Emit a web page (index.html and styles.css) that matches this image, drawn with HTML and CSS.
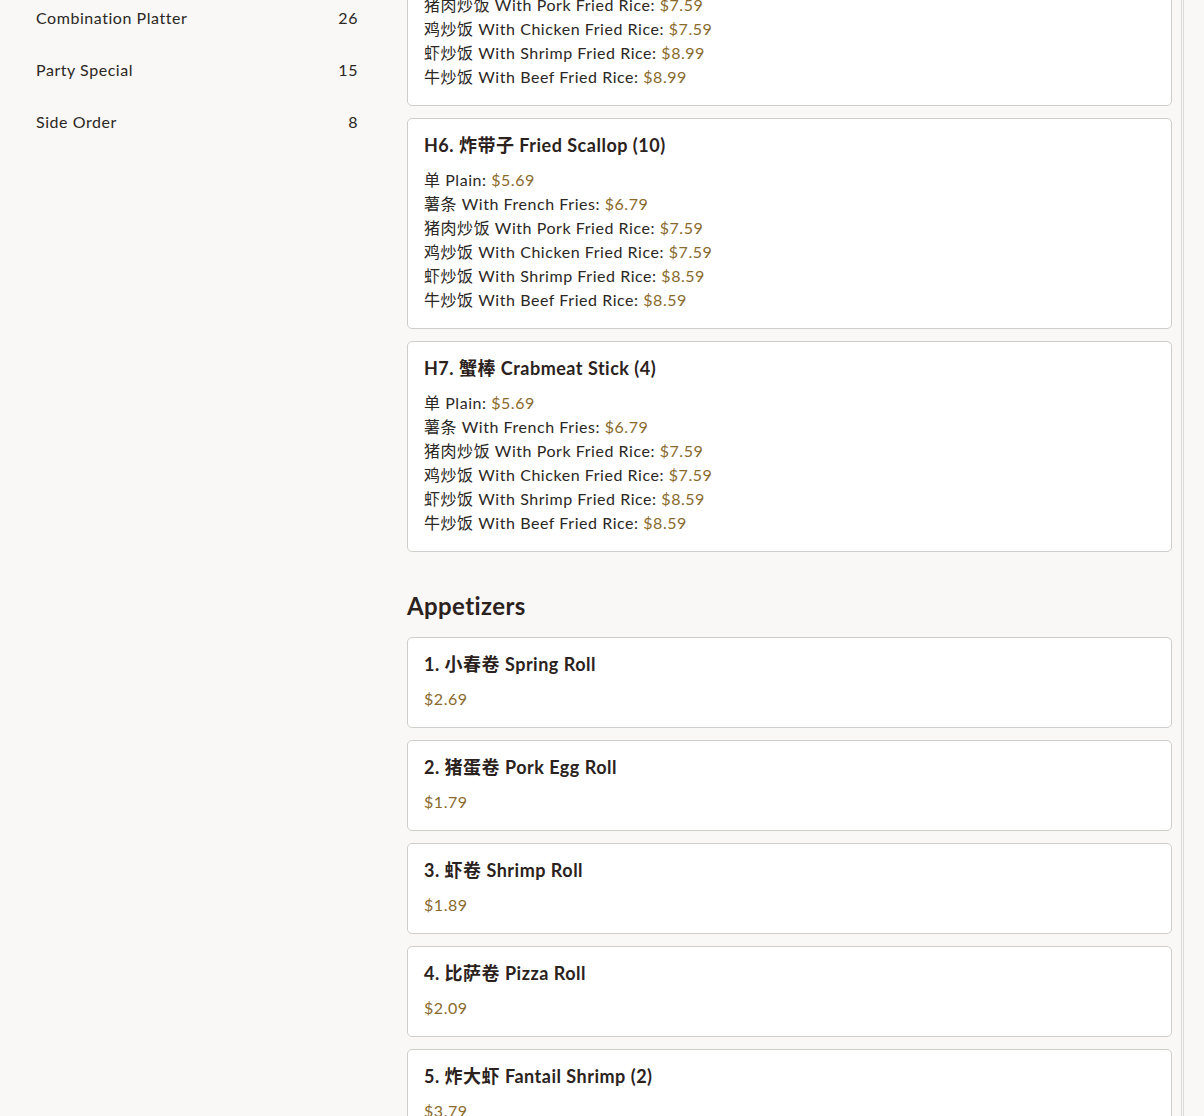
FILE: index.html
```html
<!DOCTYPE html>
<html lang="en">

<head>
    <meta charset="UTF-8">
    <title>Menu</title>
    <meta name="viewport" content="width=device-width, initial-scale=1">
    <link rel="stylesheet" href="styles.css">
</head>

<body>
    <div class="page">
        <aside class="sidebar">
            <div class="cat"><span>Chef's Specialties</span><span>18</span></div>
            <div class="cat"><span>Diet Menu</span><span>10</span></div>
            <div class="cat"><span>Combination Platter</span><span>26</span></div>
            <div class="cat"><span>Party Special</span><span>15</span></div>
            <div class="cat"><span>Side Order</span><span>8</span></div>
        </aside>

        <main class="content">
            <section class="section">
                <div class="card">
                    <h3>H5. 炸鱼 Fried Fish (2)</h3>
                    <div class="opt">单 Plain: <span class="price">$5.69</span></div>
                    <div class="opt">薯条 With French Fries: <span class="price">$6.79</span></div>
                    <div class="opt">猪肉炒饭 With Pork Fried Rice: <span class="price">$7.59</span></div>
                    <div class="opt">鸡炒饭 With Chicken Fried Rice: <span class="price">$7.59</span></div>
                    <div class="opt">虾炒饭 With Shrimp Fried Rice: <span class="price">$8.99</span></div>
                    <div class="opt">牛炒饭 With Beef Fried Rice: <span class="price">$8.99</span></div>
                </div>
                <div class="card">
                    <h3>H6. 炸带子 Fried Scallop (10)</h3>
                    <div class="opt">单 Plain: <span class="price">$5.69</span></div>
                    <div class="opt">薯条 With French Fries: <span class="price">$6.79</span></div>
                    <div class="opt">猪肉炒饭 With Pork Fried Rice: <span class="price">$7.59</span></div>
                    <div class="opt">鸡炒饭 With Chicken Fried Rice: <span class="price">$7.59</span></div>
                    <div class="opt">虾炒饭 With Shrimp Fried Rice: <span class="price">$8.59</span></div>
                    <div class="opt">牛炒饭 With Beef Fried Rice: <span class="price">$8.59</span></div>
                </div>
                <div class="card">
                    <h3>H7. 蟹棒 Crabmeat Stick (4)</h3>
                    <div class="opt">单 Plain: <span class="price">$5.69</span></div>
                    <div class="opt">薯条 With French Fries: <span class="price">$6.79</span></div>
                    <div class="opt">猪肉炒饭 With Pork Fried Rice: <span class="price">$7.59</span></div>
                    <div class="opt">鸡炒饭 With Chicken Fried Rice: <span class="price">$7.59</span></div>
                    <div class="opt">虾炒饭 With Shrimp Fried Rice: <span class="price">$8.59</span></div>
                    <div class="opt">牛炒饭 With Beef Fried Rice: <span class="price">$8.59</span></div>
                </div>
            </section>

            <section class="section">
                <h2>Appetizers</h2>
                <div class="card">
                    <h3>1. 小春卷 Spring Roll</h3>
                    <div class="price">$2.69</div>
                </div>
                <div class="card">
                    <h3>2. 猪蛋卷 Pork Egg Roll</h3>
                    <div class="price">$1.79</div>
                </div>
                <div class="card">
                    <h3>3. 虾卷 Shrimp Roll</h3>
                    <div class="price">$1.89</div>
                </div>
                <div class="card">
                    <h3>4. 比萨卷 Pizza Roll</h3>
                    <div class="price">$2.09</div>
                </div>
                <div class="card">
                    <h3>5. 炸大虾 Fantail Shrimp (2)</h3>
                    <div class="price">$3.79</div>
                </div>
                <div class="card">
                    <h3>6. 鸡翅 Chicken Wings (4)</h3>
                    <div class="price">$4.59</div>
                </div>
            </section>
        </main>
    </div>
</body>

</html>
```

FILE: styles.css
```css
html,
body {
    overflow: hidden;
}

body {
    margin: 0;
    font-family: Lato, "Noto Sans CJK SC", sans-serif;
    font-size: 16px;
    line-height: 24px;
    letter-spacing: 0.55px;
    color: #2b2724;
    background-color: #f9f8f6;
}

.page {
    display: flex;
    gap: 49px;
    margin-top: -112px;
    padding-left: 36px;
    padding-right: 20px;
}

.sidebar {
    width: 322px;
    flex-shrink: 0;
}

.cat {
    display: flex;
    justify-content: space-between;
    padding: 14px 0;
}

.content {
    flex: 1;
    padding-top: 7px;
    padding-right: 9px;
    border-right: 3px double #dcdbd9;
}

.section {
    display: flex;
    flex-direction: column;
    gap: 12px;
    margin-bottom: 38px;
}

.section h2 {
    margin: 0 0 3px;
    font-size: 24px;
    line-height: 32px;
    font-weight: 700;
    letter-spacing: 0.4px;
    color: #2b2220;
}

.card {
    background-color: #fff;
    border: 1px solid #cfcdca;
    border-radius: 5px;
    padding: 14px 16px 16px;
}

.card h3 {
    margin: 0 0 11px;
    font-size: 18px;
    line-height: 24px;
    font-weight: 700;
    letter-spacing: 0.5px;
    color: #2b2220;
}

.price {
    color: #8a6a2c;
}
```
